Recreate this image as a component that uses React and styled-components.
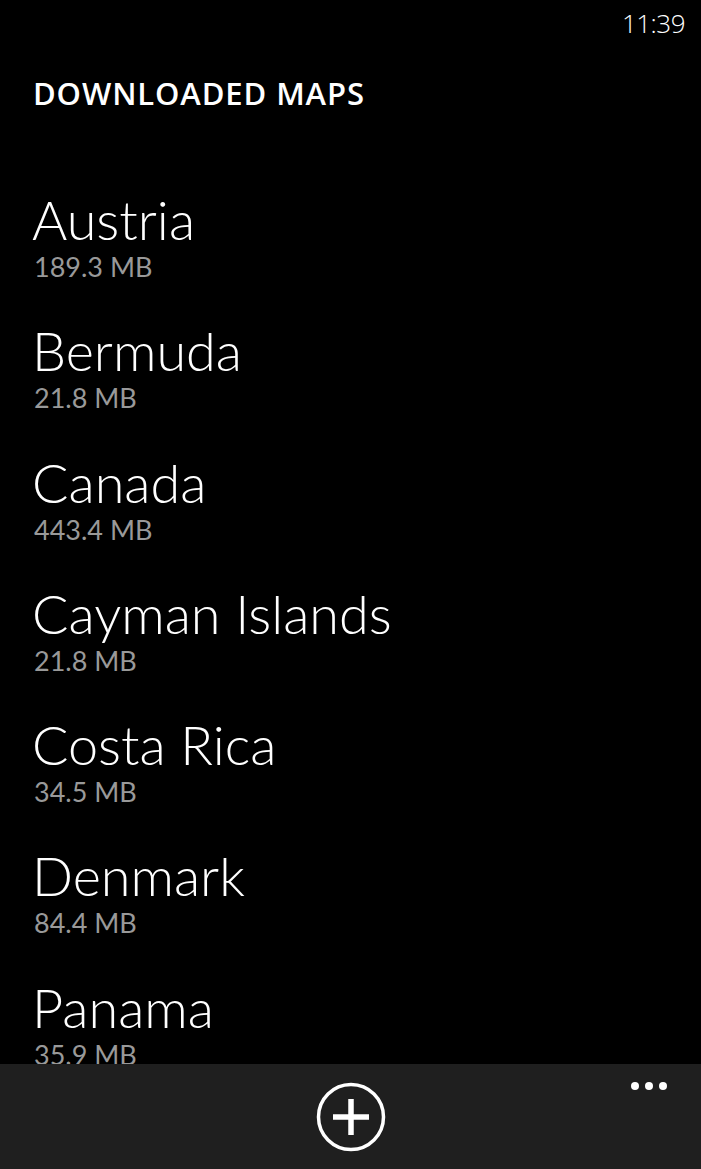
import React from 'react'
import styled, { createGlobalStyle } from 'styled-components'

const GlobalStyle = createGlobalStyle`
  html, body {
    margin: 0;
    padding: 0;
    background: #000;
  }
  body {
    font-family: "Open Sans", "Noto Sans", sans-serif;
    color: #fff;
  }
`

const maps = [
  { name: 'Austria', size: '189.3 MB' },
  { name: 'Bermuda', size: '21.8 MB' },
  { name: 'Canada', size: '443.4 MB' },
  { name: 'Cayman Islands', size: '21.8 MB' },
  { name: 'Costa Rica', size: '34.5 MB' },
  { name: 'Denmark', size: '84.4 MB' },
  { name: 'Panama', size: '35.9 MB' },
]

const Screen = styled.div`
  width: 701px;
  height: 1169px;
  display: flex;
  flex-direction: column;
  background: #000;
  overflow: hidden;
`

const StatusBar = styled.div`
  height: 45px;
  display: flex;
  align-items: center;
  justify-content: flex-end;
  padding-right: 16px;
  flex-shrink: 0;
`

const Clock = styled.span`
  font-size: 26px;
  font-weight: 300;
  letter-spacing: -0.5px;
`

const Title = styled.h1`
  margin: 28px 0 0 33px;
  font-size: 31px;
  line-height: 40px;
  font-weight: 600;
  letter-spacing: 0.9px;
  flex-shrink: 0;
`

const List = styled.ul`
  list-style: none;
  margin: 0;
  padding: 77px 0 0 0;
  flex: 1;
  overflow: hidden;
`

const Row = styled.li`
  height: 131.3px;
  display: flex;
  flex-direction: column;
  padding-left: 32px;
`

const Name = styled.div`
  font-family: Lato, "Open Sans", sans-serif;
  font-size: 54px;
  line-height: 60px;
  font-weight: 300;
`

const Size = styled.div`
  font-family: Lato, "Open Sans", sans-serif;
  font-size: 27px;
  line-height: 34px;
  color: #999;
  font-weight: 400;
  padding-left: 2px;
`

const AppBar = styled.div`
  height: 105px;
  background: #1f1f1f;
  flex-shrink: 0;
  position: relative;
  display: flex;
  justify-content: center;
  align-items: flex-start;
  padding-top: 17px;
  box-sizing: border-box;
`

const IconButton = styled.button`
  width: 72px;
  height: 72px;
  padding: 0;
  border: none;
  background: transparent;
  color: #fff;
  display: flex;
`

const More = styled.div`
  position: absolute;
  top: 18px;
  right: 34px;
  display: flex;
  gap: 6px;
`

const Dot = styled.span`
  width: 8px;
  height: 8px;
  border-radius: 50%;
  background: #fff;
`

const AddIcon = () => (
  <svg width="72" height="72" viewBox="0 0 72 72">
    <circle cx="36" cy="36" r="32.5" fill="none" stroke="currentColor" strokeWidth="3.5" />
    <path d="M36 18v36M18 36h36" stroke="currentColor" strokeWidth="5.5" />
  </svg>
)

export default function App() {
  return (
    <Screen>
      <GlobalStyle />
      <StatusBar>
        <Clock>11:39</Clock>
      </StatusBar>
      <Title>DOWNLOADED MAPS</Title>
      <List>
        {maps.map((m) => (
          <Row key={m.name}>
            <Name>{m.name}</Name>
            <Size>{m.size}</Size>
          </Row>
        ))}
      </List>
      <AppBar>
        <IconButton aria-label="add">
          <AddIcon />
        </IconButton>
        <More>
          <Dot />
          <Dot />
          <Dot />
        </More>
      </AppBar>
    </Screen>
  )
}
